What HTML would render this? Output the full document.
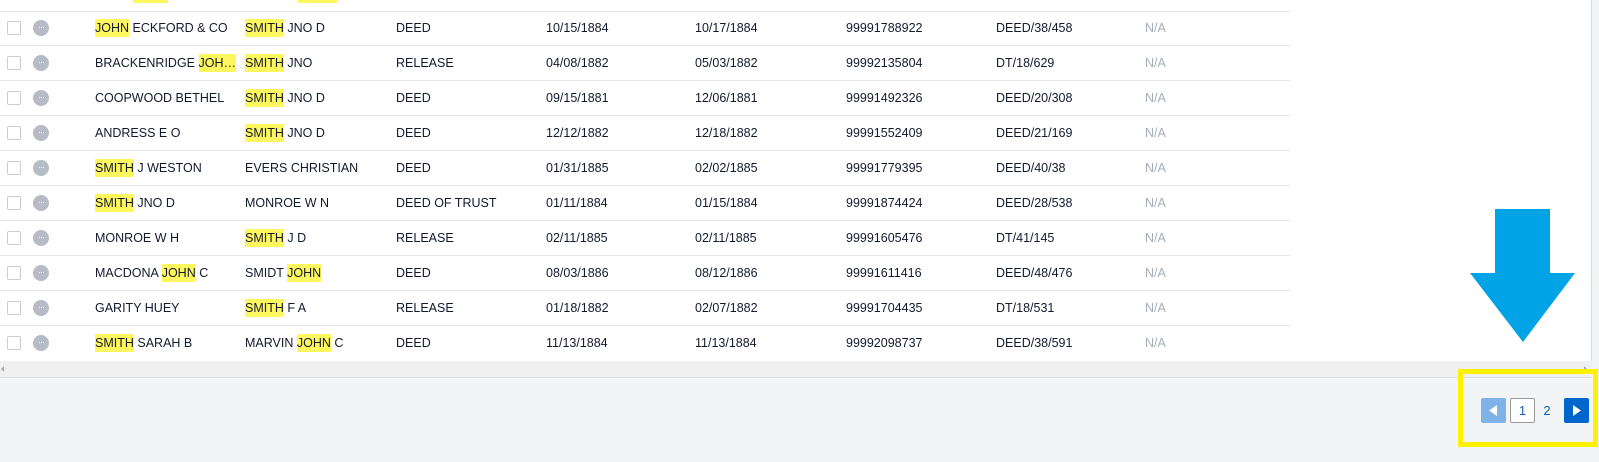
<!DOCTYPE html>
<html><head><meta charset="utf-8"><style>
*{margin:0;padding:0;box-sizing:border-box}
body{width:1599px;height:462px;background:#f3f4f6;position:relative;overflow:hidden;font-family:"Liberation Sans",sans-serif;font-size:12.5px;color:#141a2e}
#tbl{position:absolute;left:0;top:0;width:1592px;height:361px;background:#fff;border-right:1px solid #d8dbe3}
.row{position:absolute;left:0;width:1290px;height:35px;border-bottom:1px solid #e4e6ea}
.c{position:absolute;top:0;height:34px;line-height:34px;white-space:nowrap}
.cb{position:absolute;left:7px;top:10px;width:14px;height:14px;border:1px solid #c9ccd3;border-radius:2px;background:#fff}
.dot{position:absolute;left:33px;top:9px;width:16px;height:16px;border-radius:50%;background:#b6bbc6;color:#fff;font-size:9px;line-height:14px;text-align:center;letter-spacing:-1px}
.h{background:#fff75e;padding:2px 0}
.na{color:#a7adb8}
#sb{position:absolute;left:0;top:361px;width:1592px;height:17px;background:#f0f0f0;border-bottom:1px solid #dcdfe4}
#yb{position:absolute;left:1458px;top:369px;width:140px;height:78px;border:5px solid #fff200}
.pb{position:absolute;top:398px;width:25px;height:25px;border-radius:2px}
</style></head><body>
<div id="tbl">
<div style="position:absolute;left:133px;top:0;width:35px;height:3px;background:#fff75e"></div>
<div style="position:absolute;left:298px;top:0;width:40px;height:3px;background:#fff75e"></div>
<div style="position:absolute;left:0;top:11px;width:1290px;height:1px;background:#e4e6ea"></div>
<div class="row" style="top:11px"><div class="cb"></div><div class="dot">···</div><span class="c" style="left:95px"><span class="h">JOHN</span> ECKFORD &amp; CO</span><span class="c" style="left:245px"><span class="h">SMITH</span> JNO D</span><span class="c" style="left:396px">DEED</span><span class="c" style="left:546px">10/15/1884</span><span class="c" style="left:695px">10/17/1884</span><span class="c" style="left:846px">99991788922</span><span class="c" style="left:996px">DEED/38/458</span><span class="c na" style="left:1145px">N/A</span></div>
<div class="row" style="top:46px"><div class="cb"></div><div class="dot">···</div><span class="c" style="left:95px">BRACKENRIDGE <span class="h">JOH…</span></span><span class="c" style="left:245px"><span class="h">SMITH</span> JNO</span><span class="c" style="left:396px">RELEASE</span><span class="c" style="left:546px">04/08/1882</span><span class="c" style="left:695px">05/03/1882</span><span class="c" style="left:846px">99992135804</span><span class="c" style="left:996px">DT/18/629</span><span class="c na" style="left:1145px">N/A</span></div>
<div class="row" style="top:81px"><div class="cb"></div><div class="dot">···</div><span class="c" style="left:95px">COOPWOOD BETHEL</span><span class="c" style="left:245px"><span class="h">SMITH</span> JNO D</span><span class="c" style="left:396px">DEED</span><span class="c" style="left:546px">09/15/1881</span><span class="c" style="left:695px">12/06/1881</span><span class="c" style="left:846px">99991492326</span><span class="c" style="left:996px">DEED/20/308</span><span class="c na" style="left:1145px">N/A</span></div>
<div class="row" style="top:116px"><div class="cb"></div><div class="dot">···</div><span class="c" style="left:95px">ANDRESS E O</span><span class="c" style="left:245px"><span class="h">SMITH</span> JNO D</span><span class="c" style="left:396px">DEED</span><span class="c" style="left:546px">12/12/1882</span><span class="c" style="left:695px">12/18/1882</span><span class="c" style="left:846px">99991552409</span><span class="c" style="left:996px">DEED/21/169</span><span class="c na" style="left:1145px">N/A</span></div>
<div class="row" style="top:151px"><div class="cb"></div><div class="dot">···</div><span class="c" style="left:95px"><span class="h">SMITH</span> J WESTON</span><span class="c" style="left:245px">EVERS CHRISTIAN</span><span class="c" style="left:396px">DEED</span><span class="c" style="left:546px">01/31/1885</span><span class="c" style="left:695px">02/02/1885</span><span class="c" style="left:846px">99991779395</span><span class="c" style="left:996px">DEED/40/38</span><span class="c na" style="left:1145px">N/A</span></div>
<div class="row" style="top:186px"><div class="cb"></div><div class="dot">···</div><span class="c" style="left:95px"><span class="h">SMITH</span> JNO D</span><span class="c" style="left:245px">MONROE W N</span><span class="c" style="left:396px">DEED OF TRUST</span><span class="c" style="left:546px">01/11/1884</span><span class="c" style="left:695px">01/15/1884</span><span class="c" style="left:846px">99991874424</span><span class="c" style="left:996px">DEED/28/538</span><span class="c na" style="left:1145px">N/A</span></div>
<div class="row" style="top:221px"><div class="cb"></div><div class="dot">···</div><span class="c" style="left:95px">MONROE W H</span><span class="c" style="left:245px"><span class="h">SMITH</span> J D</span><span class="c" style="left:396px">RELEASE</span><span class="c" style="left:546px">02/11/1885</span><span class="c" style="left:695px">02/11/1885</span><span class="c" style="left:846px">99991605476</span><span class="c" style="left:996px">DT/41/145</span><span class="c na" style="left:1145px">N/A</span></div>
<div class="row" style="top:256px"><div class="cb"></div><div class="dot">···</div><span class="c" style="left:95px">MACDONA <span class="h">JOHN</span> C</span><span class="c" style="left:245px">SMIDT <span class="h">JOHN</span></span><span class="c" style="left:396px">DEED</span><span class="c" style="left:546px">08/03/1886</span><span class="c" style="left:695px">08/12/1886</span><span class="c" style="left:846px">99991611416</span><span class="c" style="left:996px">DEED/48/476</span><span class="c na" style="left:1145px">N/A</span></div>
<div class="row" style="top:291px"><div class="cb"></div><div class="dot">···</div><span class="c" style="left:95px">GARITY HUEY</span><span class="c" style="left:245px"><span class="h">SMITH</span> F A</span><span class="c" style="left:396px">RELEASE</span><span class="c" style="left:546px">01/18/1882</span><span class="c" style="left:695px">02/07/1882</span><span class="c" style="left:846px">99991704435</span><span class="c" style="left:996px">DT/18/531</span><span class="c na" style="left:1145px">N/A</span></div>
<div class="row" style="top:326px;border-bottom:none"><div class="cb"></div><div class="dot">···</div><span class="c" style="left:95px"><span class="h">SMITH</span> SARAH B</span><span class="c" style="left:245px">MARVIN <span class="h">JOHN</span> C</span><span class="c" style="left:396px">DEED</span><span class="c" style="left:546px">11/13/1884</span><span class="c" style="left:695px">11/13/1884</span><span class="c" style="left:846px">99992098737</span><span class="c" style="left:996px">DEED/38/591</span><span class="c na" style="left:1145px">N/A</span></div>
<svg style="position:absolute;left:0;top:0" width="1592" height="361"><polygon points="1495,209 1550,209 1550,273 1575,273 1523,342 1470,273 1495,273" fill="#00a4e6"/></svg>
</div>
<div id="sb"><svg width="1592" height="17"><polygon points="4,5 4,11 1,8" fill="#aaa"/><polygon points="1584,5 1584,11 1587,8" fill="#aaa"/></svg></div>
<div id="yb"></div>
<div class="pb" style="left:1481px;background:#7fb2e6"><svg width="25" height="25"><polygon points="16,7 16,18 8,12.5" fill="#fff"/></svg></div>
<div class="pb" style="left:1510px;border:1px solid #999;background:#fff;color:#1a5fb4;text-align:center;line-height:23px;font-size:13px">1</div>
<div style="position:absolute;left:1541px;top:398px;width:12px;line-height:25px;text-align:center;color:#0066cc;font-size:13px">2</div>
<div class="pb" style="left:1564px;background:#0066cc"><svg width="25" height="25"><polygon points="9,7 9,18 17,12.5" fill="#fff"/></svg></div>
</body></html>
